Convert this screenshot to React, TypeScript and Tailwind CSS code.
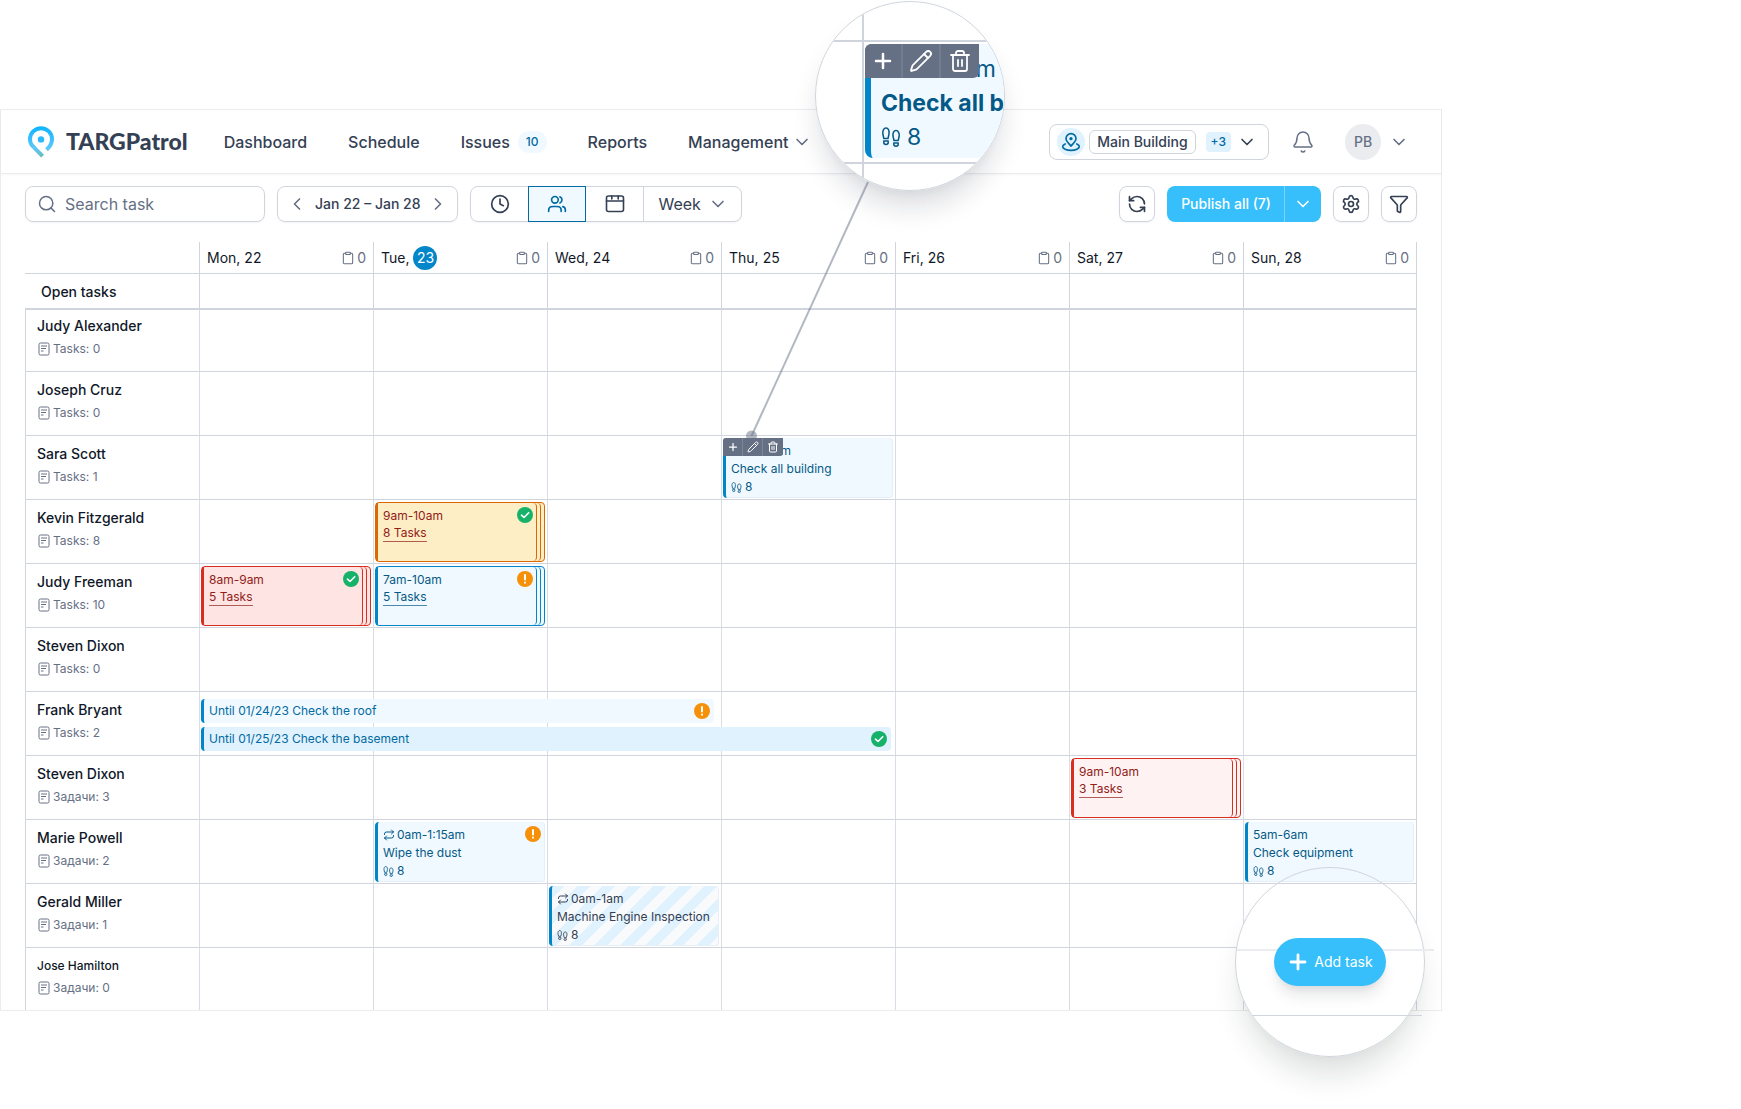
import React from 'react';
import {
  Bell,
  ChevronDown,
  ChevronLeft,
  ChevronRight,
  Clipboard,
  Clock,
  Funnel,
  Pencil,
  Plus,
  RefreshCcw,
  Repeat,
  Search,
  Settings,
  Trash2,
} from 'lucide-react';

type Tone = 'blue' | 'amber' | 'red' | 'rose' | 'striped';
type Status = 'done' | 'warning';

interface Task {
  time: string;
  title: string;
  tone: Tone;
  status?: Status;
  stacked?: boolean;
  repeat?: boolean;
  steps?: number;
  actions?: boolean;
}

interface LongTask {
  title: string;
  status: Status;
  className: string;
}

interface Person {
  name: string;
  label: string;
  count: number;
  small?: boolean;
  tasks?: Record<number, Task>;
  longTasks?: LongTask[];
}

const days = ['Mon, 22', 'Tue, 23', 'Wed, 24', 'Thu, 25', 'Fri, 26', 'Sat, 27', 'Sun, 28'];
const today = 1;

const people: Person[] = [
  { name: 'Judy Alexander', label: 'Tasks', count: 0 },
  { name: 'Joseph Cruz', label: 'Tasks', count: 0 },
  {
    name: 'Sara Scott',
    label: 'Tasks',
    count: 1,
    tasks: { 3: { time: '9am-10am', title: 'Check all building', tone: 'blue', steps: 8, actions: true } },
  },
  {
    name: 'Kevin Fitzgerald',
    label: 'Tasks',
    count: 8,
    tasks: { 1: { time: '9am-10am', title: '8 Tasks', tone: 'amber', status: 'done', stacked: true } },
  },
  {
    name: 'Judy Freeman',
    label: 'Tasks',
    count: 10,
    tasks: {
      0: { time: '8am-9am', title: '5 Tasks', tone: 'red', status: 'done', stacked: true },
      1: { time: '7am-10am', title: '5 Tasks', tone: 'blue', status: 'warning', stacked: true },
    },
  },
  { name: 'Steven Dixon', label: 'Tasks', count: 0 },
  {
    name: 'Frank Bryant',
    label: 'Tasks',
    count: 2,
    longTasks: [
      { title: 'Until 01/24/23 Check the roof', status: 'warning', className: 'w-[298%] bg-[#f0f9ff]' },
      { title: 'Until 01/25/23 Check the basement', status: 'done', className: 'w-[401%] bg-[#e0f2fe]' },
    ],
  },
  {
    name: 'Steven Dixon',
    label: 'Задачи',
    count: 3,
    tasks: { 5: { time: '9am-10am', title: '3 Tasks', tone: 'rose', stacked: true } },
  },
  {
    name: 'Marie Powell',
    label: 'Задачи',
    count: 2,
    tasks: {
      1: { time: '0am-1:15am', title: 'Wipe the dust', tone: 'blue', status: 'warning', repeat: true, steps: 8 },
      6: { time: '5am-6am', title: 'Check equipment', tone: 'blue', steps: 8 },
    },
  },
  {
    name: 'Gerald Miller',
    label: 'Задачи',
    count: 1,
    tasks: { 2: { time: '0am-1am', title: 'Machine Engine Inspection', tone: 'striped', repeat: true, steps: 8 } },
  },
  { name: 'Jose Hamilton', label: 'Задачи', count: 0, small: true },
];

const toneStyles: Record<Tone, { text: string; bg: string; border: string }> = {
  blue: { text: 'text-[#065986]', bg: 'bg-[#f0f9ff]', border: 'border-[#0086c9]' },
  amber: { text: 'text-[#912018]', bg: 'bg-[#feeec6]', border: 'border-[#dc6803]' },
  red: { text: 'text-[#912018]', bg: 'bg-[#fee4e2]', border: 'border-[#d92d20]' },
  rose: { text: 'text-[#912018]', bg: 'bg-[#fef3f2]', border: 'border-[#d92d20]' },
  striped: {
    text: 'text-[#344054]',
    bg: 'bg-[repeating-linear-gradient(135deg,#e0f2fe_0px,#e0f2fe_9px,#f9fafb_9px,#f9fafb_18px)]',
    border: 'border-[#0086c9]',
  },
};

const Logo = () => (
  <svg viewBox="0 0 26 32" className="h-8 w-[26px]" fill="none" aria-hidden="true">
    <defs>
      <linearGradient id="pin" x1="0" y1="0" x2="0" y2="32" gradientUnits="userSpaceOnUse">
        <stop offset="0" stopColor="#0cb4ff" />
        <stop offset="0.7" stopColor="#5cc8fb" />
        <stop offset="1" stopColor="#6fb7b0" />
      </linearGradient>
    </defs>
    <path
      d="M14.6 30.2 6.2 21.6C3.4 19.2 2 16.4 2 13.2a11 11 0 0 1 22 0c0 4-2.2 7.600-5.500 10.600"
      stroke="url(#pin)"
      strokeWidth="4"
    />
    <circle cx="13" cy="13.400" r="3.200" fill="#2bb8fb" />
  </svg>
);

const UsersIcon = () => (
  <svg viewBox="0 0 24 24" className="h-5 w-5" fill="none" stroke="currentColor" strokeWidth="2" strokeLinecap="round" strokeLinejoin="round" aria-hidden="true">
    <path d="M22 21V19C22 17.136 20.725 15.570 19 15.126M15.500 3.290C16.966 3.884 18 5.321 18 7C18 8.679 16.966 10.116 15.500 10.709M17 21C17 19.136 17 18.204 16.695 17.469C16.290 16.489 15.511 15.710 14.531 15.305C13.796 15 12.864 15 11 15H8C6.136 15 5.204 15 4.469 15.305C3.489 15.710 2.710 16.489 2.304 17.469C2 18.204 2 19.136 2 21" />
    <circle cx="9.500" cy="7" r="4" />
  </svg>
);

const CalendarIcon = () => (
  <svg viewBox="0 0 20 20" className="h-5 w-5" fill="none" stroke="currentColor" strokeWidth="1.600" strokeLinecap="round" strokeLinejoin="round" aria-hidden="true">
    <rect x="1.500" y="2" width="17" height="15.500" rx="2" />
    <path d="M1.500 7h17M6.800 2v3M13.200 2v3" />
  </svg>
);

const MarkerIcon = () => (
  <svg viewBox="0 0 24 24" className="h-5 w-5" fill="none" stroke="currentColor" strokeWidth="2" strokeLinecap="round" strokeLinejoin="round" aria-hidden="true">
    <path d="M5 14.286C3.149 15.103 2 16.241 2 17.500C2 19.985 6.477 22 12 22C17.523 22 22 19.985 22 17.500C22 16.241 20.851 15.103 19 14.286M18 8C18 12.064 13.500 14 12 17C10.500 14 6 12.064 6 8C6 4.686 8.686 2 12 2C15.314 2 18 4.686 18 8Z" />
    <circle cx="12" cy="8" r="1" />
  </svg>
);

const NoteIcon = () => (
  <svg viewBox="0 0 12 14" className="h-[14px] w-3" fill="none" stroke="currentColor" aria-hidden="true">
    <rect x="1" y="1" width="10" height="12" rx="1.500" />
    <path d="M3 4h6M3 6.500h5M3 9h2.500" />
  </svg>
);

const StepsIcon = ({ className }: { className: string }) => (
  <svg viewBox="0 0 20 20" className={className} fill="none" stroke="currentColor" strokeWidth="1.500" strokeLinejoin="round" aria-hidden="true">
    <path d="M5 1C2.500 1 1.600 4 1.800 6.500L2.800 11.500H7L8 7C8.400 4 7.500 1 5 1Z" />
    <path d="M2.800 14H7.200V15.500C7.200 18 2.800 18 2.800 15.500Z" />
    <path d="M15 3.500C12.500 3.500 11.600 6.500 12 9L13 13.500H17.200L18.200 9C18.400 6.500 17.500 3.500 15 3.500Z" />
    <path d="M12.800 16H17.200V17.300C17.200 19.800 12.800 19.800 12.800 17.300Z" />
  </svg>
);

const StatusBadge = ({ status }: { status: Status }) => (
  <svg viewBox="0 0 16 16" className="h-4 w-4 flex-none" fill="none" stroke="#fff" strokeLinecap="round" strokeLinejoin="round" role="img" aria-label={status}>
    {status === 'done' ? (
      <>
        <circle cx="8" cy="8" r="8" fill="#17b26a" stroke="none" />
        <path d="M4.500 8.200 7 10.500 11.700 5.700" strokeWidth="1.600" />
      </>
    ) : (
      <>
        <circle cx="8" cy="8" r="8" fill="#f79009" stroke="none" />
        <path d="M8 4v4.600M8 11.600v.1" strokeWidth="2" />
      </>
    )}
  </svg>
);

const TaskActions = () => (
  <div className="absolute top-0 -left-[3px] flex h-[18px] divide-x divide-[#7d879a] rounded-tl-[3px] rounded-br-[3px] bg-[#667085] text-white">
    <button type="button" aria-label="Add" className="flex w-5 items-center justify-center">
      <Plus className="h-3 w-3" strokeWidth={2.5} />
    </button>
    <button type="button" aria-label="Edit" className="flex w-5 items-center justify-center">
      <Pencil className="h-3 w-3" />
    </button>
    <button type="button" aria-label="Delete" className="flex w-5 items-center justify-center">
      <Trash2 className="h-3 w-3" />
    </button>
  </div>
);

const TaskCard = ({ task }: { task: Task }) => {
  const tone = toneStyles[task.tone];

  if (task.stacked) {
    return (
      <div className={`h-[60px] rounded border pr-[3px] ${tone.border} ${tone.bg}`}>
        <div className={`h-full rounded-r border-r pr-[3px] ${tone.border}`}>
          <div className={`flex h-full justify-between rounded-r border-r border-l-2 pt-1 pr-[3px] pl-[5px] text-xs leading-[18px] ${tone.border} ${tone.text}`}>
            <div>
              <p>{task.time}</p>
              <a href="#" className="block w-fit border-b border-current/70 leading-4">
                {task.title}
              </a>
            </div>
            {task.status && <StatusBadge status={task.status} />}
          </div>
        </div>
      </div>
    );
  }

  return (
    <div className={`relative flex h-[60px] justify-between rounded border-l-[3px] pt-1 pr-1 pl-[5px] text-xs leading-[18px] shadow-[inset_-1px_0_0_#e6eff7,inset_0_-1px_0_#e6eff7] ${tone.border} ${tone.bg} ${tone.text}`}>
      <div className="whitespace-nowrap">
        <p className="flex items-center gap-[2px]">
          {task.repeat && <Repeat className="h-3 w-3" />}
          {task.time}
        </p>
        <p>{task.title}</p>
        <p className="flex items-center gap-[3px]">
          <StepsIcon className="h-[11px] w-[11px]" />
          {task.steps}
        </p>
      </div>
      {task.status && <StatusBadge status={task.status} />}
      {task.actions && <TaskActions />}
    </div>
  );
};

const Header = () => (
  <header className="flex h-16 items-center justify-between border-b border-[#eaecf0] pr-8 pl-[27px] shadow-[0_1px_2px_rgba(16,24,40,0.04)]">
    <div className="flex items-center">
      <a href="#" className="flex items-center gap-3 font-[Lato,sans-serif] text-[23px] font-black text-[#344054]">
        <Logo />
        TARGPatrol
      </a>
      <nav className="ml-9 flex items-center gap-[41px] text-base font-medium text-[#344054]">
        <a href="#">Dashboard</a>
        <a href="#">Schedule</a>
        <a href="#" className="flex items-center gap-2">
          Issues
          <span className="rounded-full bg-[#f0f9ff] px-2 text-xs leading-[22px] text-[#026aa2]">10</span>
        </a>
        <a href="#">Reports</a>
        <button type="button" className="flex items-center gap-1">
          Management
          <ChevronDown className="h-5 w-5 text-[#667085]" />
        </button>
      </nav>
    </div>
    <div className="flex items-center">
      <button type="button" className="flex h-9 items-center rounded-lg border border-[#d0d5dd] pr-[11px] pl-[7px] text-[#344054]">
        <span className="flex h-7 w-7 items-center justify-center rounded-full bg-[#e0f2fe] text-[#026aa2]">
          <MarkerIcon />
        </span>
        <span className="ml-1 rounded-md border border-[#d0d5dd] px-[7px] text-sm leading-[22px] font-medium">Main Building</span>
        <span className="ml-[10px] rounded bg-[#e0f2fe] px-[5px] text-xs leading-5 font-medium text-[#026aa2]">+3</span>
        <ChevronDown className="ml-[6px] h-5 w-5" />
      </button>
      <button type="button" aria-label="Notifications" className="ml-[22px] text-[#667085]">
        <Bell className="h-6 w-6" strokeWidth={1.5} />
      </button>
      <button type="button" className="ml-[30px] flex items-center gap-2 text-[#667085]">
        <span className="flex h-9 w-9 items-center justify-center rounded-full bg-[#eaecf0] text-sm font-medium">PB</span>
        <ChevronDown className="h-5 w-5" />
      </button>
    </div>
  </header>
);

const Toolbar = () => (
  <div className="flex items-center justify-between pt-3 pb-5 text-[#344054]">
    <div className="flex items-center gap-3">
      <label className="flex h-9 w-60 items-center gap-2 rounded-lg border border-[#d0d5dd] px-[11px] text-[#667085] shadow-xs">
        <Search className="h-5 w-5 flex-none" strokeWidth={1.8} />
        <input
          type="text"
          aria-label="Search task"
          placeholder="Search task"
          className="h-full w-full min-w-0 text-base outline-none placeholder:text-[#667085]"
        />
      </label>
      <div className="flex h-9 items-center gap-2 rounded-lg border border-[#d0d5dd] px-[9px] text-sm font-medium shadow-xs">
        <button type="button" aria-label="Previous week">
          <ChevronLeft className="h-5 w-5 text-[#667085]" />
        </button>
        Jan 22 – Jan 28
        <button type="button" aria-label="Next week">
          <ChevronRight className="h-5 w-5 text-[#667085]" />
        </button>
      </div>
      <div className="flex h-9 rounded-lg border border-[#d0d5dd] shadow-xs">
        <button type="button" aria-label="By time" className="flex w-[57px] items-center justify-center">
          <Clock className="h-5 w-5" />
        </button>
        <button
          type="button"
          aria-label="By employee"
          aria-pressed="true"
          className="-my-px flex w-[58px] items-center justify-center border border-[#026aa2] bg-[#f0f9ff] text-[#026aa2]"
        >
          <UsersIcon />
        </button>
        <button type="button" aria-label="Calendar" className="flex w-[58px] items-center justify-center border-r border-[#d0d5dd]">
          <CalendarIcon />
        </button>
        <label className="relative flex items-center">
          <select aria-label="Period" defaultValue="Week" className="h-full w-[97px] appearance-none pl-[14px] text-base outline-none">
            <option>Week</option>
            <option>Month</option>
          </select>
          <ChevronDown className="pointer-events-none absolute right-[13px] h-5 w-5 text-[#667085]" />
        </label>
      </div>
    </div>
    <div className="flex items-center gap-3">
      <button type="button" aria-label="Refresh" className="flex h-9 w-9 items-center justify-center rounded-lg border border-[#d0d5dd] shadow-xs">
        <RefreshCcw className="h-5 w-5" />
      </button>
      <div className="flex h-9 divide-x divide-[#7cd4fd] overflow-hidden rounded-lg bg-[#36bffa] text-sm font-medium text-white">
        <button type="button" className="pr-[13px] pl-[14px]">
          Publish all (7)
        </button>
        <button type="button" aria-label="Publish options" className="flex w-9 items-center justify-center">
          <ChevronDown className="h-5 w-5" />
        </button>
      </div>
      <button type="button" aria-label="Settings" className="flex h-9 w-9 items-center justify-center rounded-lg border border-[#d0d5dd] shadow-xs">
        <Settings className="h-5 w-5" />
      </button>
      <button type="button" aria-label="Filter" className="flex h-9 w-9 items-center justify-center rounded-lg border border-[#d0d5dd] shadow-xs">
        <Funnel className="h-5 w-5" />
      </button>
    </div>
  </div>
);

const DayHeading = ({ day, isToday }: { day: string; isToday: boolean }) => {
  const [weekday, date] = day.split(' ');

  return (
    <div className="flex items-center justify-between px-[7px]">
      <span className="flex items-center gap-1">
        {weekday}
        <span className={isToday ? 'flex h-6 w-6 items-center justify-center rounded-full bg-[#0086c9] text-white' : ''}>{date}</span>
      </span>
      <span className="flex items-center gap-[2px] text-[#667085]">
        <Clipboard className="h-[14px] w-[14px]" strokeWidth={1.8} />0
      </span>
    </div>
  );
};

const Schedule = () => (
  <table className="w-full table-fixed border-separate border-spacing-0 text-left">
    <thead className="text-sm text-[#101828]">
      <tr className="h-8">
        <td className="border-b border-[#d0d5dd]" />
        {days.map((day, i) => (
          <th key={day} scope="col" className="border-b border-l border-[#d0d5dd] p-0 font-normal last:border-r">
            <DayHeading day={day} isToday={i === today} />
          </th>
        ))}
      </tr>
    </thead>
    <tbody>
      <tr className="h-9">
        <th scope="row" className="border-b-2 border-[#d0d5dd] p-0 pt-[2px] pl-4 text-sm font-medium text-[#101828]">
          Open tasks
        </th>
        {days.map((day) => (
          <td key={day} className="border-b-2 border-l border-[#d0d5dd] last:border-r" />
        ))}
      </tr>
      {people.map((person, row) => {
        const edge = row === 0 || row === people.length - 1;
        const line = row === people.length - 1 ? '' : 'border-b';

        return (
          <tr key={row} className={edge ? 'h-[62px]' : 'h-16'}>
            <th scope="row" className={`border-l border-[#d0d5dd] p-0 pb-3 pl-[11px] align-bottom font-normal ${line}`}>
              <p className={`font-medium text-[#101828] ${person.small ? 'text-xs leading-[18px]' : 'text-sm leading-5'}`}>{person.name}</p>
              <p className="mt-[3px] flex items-center gap-[3px] pl-px text-xs leading-5 text-[#667085]">
                <NoteIcon />
                {person.label}: {person.count}
              </p>
            </th>
            {days.map((day, col) => (
              <td key={day} className={`relative border-l border-b-[#d0d5dd] border-l-[#d8dce4] p-0 pt-[2px] pr-[2px] pl-px align-top last:border-r last:border-r-[#d0d5dd] ${line}`}>
                {person.tasks?.[col] && <TaskCard task={person.tasks[col]} />}
                {col === 0 && person.longTasks && (
                  <div className="absolute inset-x-0 top-[7px] z-10 flex flex-col gap-1 pl-px">
                    {person.longTasks.map((task) => (
                      <div
                        key={task.title}
                        className={`flex h-6 items-center justify-between rounded border-l-[3px] border-[#0086c9] pr-1 pl-[5px] text-xs text-[#026aa2] ${task.className}`}
                      >
                        {task.title}
                        <StatusBadge status={task.status} />
                      </div>
                    ))}
                  </div>
                )}
              </td>
            ))}
          </tr>
        );
      })}
    </tbody>
  </table>
);

// Magnified view of the hovered task card
const CardLens = () => (
  <div className="absolute top-px left-[815px] z-20 h-[190px] w-[190px] overflow-hidden rounded-full border border-[#d0d5dd] bg-white">
    <div className="flex h-full">
      <div className="w-12 flex-none border-r-2 border-[#d0d5dd]">
        <div className="mt-[38px] h-[124px] border-y-2 border-[#d0d5dd]" />
      </div>
      <div className="mt-[38px] h-[124px] w-40 flex-none border-y-2 border-[#d0d5dd] pt-[2px] pl-px">
        <div className="relative h-[114px] rounded-lg border-l-[6px] border-[#0086c9] bg-[#f0f9ff] pt-2 pl-[10px] text-[23px] leading-[34px] text-[#065986]">
          <div className="absolute top-0 -left-[6px] flex h-[34px] divide-x-2 divide-[#737d91] rounded-tl-md rounded-br-md bg-[#667085] text-white">
            <span className="flex w-[38px] items-center justify-center">
              <Plus className="h-6 w-6" strokeWidth={2.5} />
            </span>
            <span className="flex w-[38px] items-center justify-center">
              <Pencil className="h-6 w-6" strokeWidth={1.8} />
            </span>
            <span className="flex w-[38px] items-center justify-center">
              <Trash2 className="h-6 w-6" strokeWidth={1.8} />
            </span>
          </div>
          <p className="whitespace-nowrap">9am-10am</p>
          <p className="font-bold whitespace-nowrap">Check all building</p>
          <p className="flex items-center gap-[6px]">
            <StepsIcon className="h-5 w-5" />8
          </p>
        </div>
      </div>
    </div>
  </div>
);

// Magnified view of the floating button
const AddTaskLens = () => (
  <div className="absolute top-[867px] left-[1235px] z-20 flex h-[190px] w-[190px] items-center justify-center rounded-full border border-[#d0d5dd] bg-[linear-gradient(to_bottom,transparent_17px,white_17px)]">
    <div className="absolute top-[81px] left-px h-[2px] w-[197px] bg-[#eaecf0]" />
    <div className="absolute top-[147px] left-4 h-px w-[170px] bg-[#d0d5dd]" />
    <button
      type="button"
      className="relative flex h-12 items-center gap-1 rounded-full bg-[#36bffa] pr-[13px] pl-3 text-sm text-white shadow-[0_12px_16px_-4px_rgba(16,24,40,0.12),0_4px_6px_-2px_rgba(16,24,40,0.06)]"
    >
      <Plus className="h-6 w-6" strokeWidth={2.8} />
      Add task
    </button>
  </div>
);

const App: React.FC = () => {
  return (
    <div className="relative min-h-screen bg-white pt-[109px] font-[Inter,sans-serif]">
      <main className="w-full max-w-[1442px] border border-[#eaecf0]">
        <Header />
        <div className="px-6">
          <Toolbar />
          <Schedule />
        </div>
      </main>

      <div className="pointer-events-none absolute top-px left-[815px] h-[190px] w-[190px] rounded-full shadow-[0_20px_28px_-4px_rgba(16,24,40,0.14),0_8px_8px_-4px_rgba(16,24,40,0.04)]" />
      <svg className="pointer-events-none absolute top-[180px] left-[740px] z-10 h-[265px] w-[135px]" viewBox="0 0 135 265" aria-hidden="true">
        <path d="M128 2 11.500 256" stroke="#667085" strokeOpacity="0.5" strokeWidth="2" />
        <circle cx="11.500" cy="256" r="5.500" fill="#667085" fillOpacity="0.5" />
      </svg>
      <CardLens />

      <div className="pointer-events-none absolute top-[867px] left-[1235px] h-[190px] w-[190px] rounded-full shadow-[0_24px_28px_-4px_rgba(16,40,24,0.12),0_8px_8px_-4px_rgba(16,24,40,0.03)]" />
      <AddTaskLens />
    </div>
  );
};

export default App;
